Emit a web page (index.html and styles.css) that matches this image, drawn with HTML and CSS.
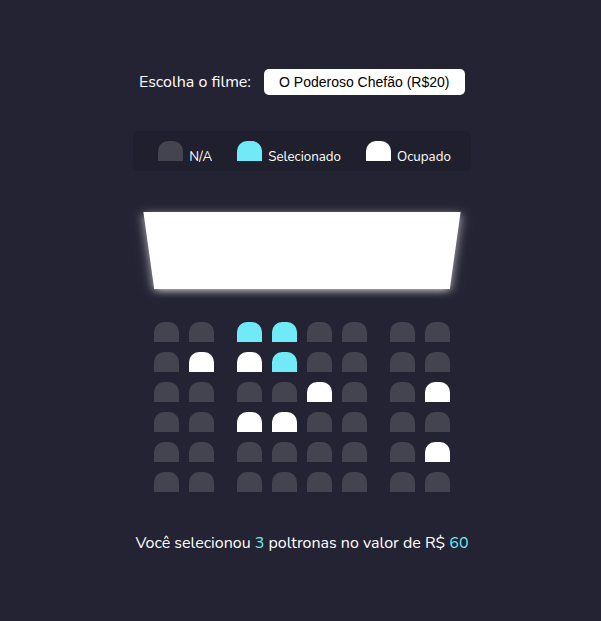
FILE: index.html
```
<!DOCTYPE html>
<html lang="pt-BR">
<head>
<meta charset="utf-8">
<meta name="viewport" content="width=device-width, initial-scale=1">
<title>Escolha de poltronas</title>
<link rel="stylesheet" href="styles.css">
</head>
<body>
<div class="movie">
  <label for="movie">Escolha o filme:</label>
  <select id="movie" class="movie-select">
    <option value="20">O Poderoso Chefão (R$20)</option>
  </select>
</div>

<ul class="legend">
  <li><span class="seat"></span><small>N/A</small></li>
  <li><span class="seat selected"></span><small>Selecionado</small></li>
  <li><span class="seat occupied"></span><small>Ocupado</small></li>
</ul>

<main class="theater">
  <div class="screen"></div>
  <div class="row">
    <input type="checkbox" class="seat" aria-label="A1">
    <input type="checkbox" class="seat" aria-label="A2">
    <input type="checkbox" class="seat" aria-label="A3" checked>
    <input type="checkbox" class="seat" aria-label="A4" checked>
    <input type="checkbox" class="seat" aria-label="A5">
    <input type="checkbox" class="seat" aria-label="A6">
    <input type="checkbox" class="seat" aria-label="A7">
    <input type="checkbox" class="seat" aria-label="A8">
  </div>
  <div class="row">
    <input type="checkbox" class="seat" aria-label="B1">
    <input type="checkbox" class="seat" aria-label="B2" disabled>
    <input type="checkbox" class="seat" aria-label="B3" disabled>
    <input type="checkbox" class="seat" aria-label="B4" checked>
    <input type="checkbox" class="seat" aria-label="B5">
    <input type="checkbox" class="seat" aria-label="B6">
    <input type="checkbox" class="seat" aria-label="B7">
    <input type="checkbox" class="seat" aria-label="B8">
  </div>
  <div class="row">
    <input type="checkbox" class="seat" aria-label="C1">
    <input type="checkbox" class="seat" aria-label="C2">
    <input type="checkbox" class="seat" aria-label="C3">
    <input type="checkbox" class="seat" aria-label="C4">
    <input type="checkbox" class="seat" aria-label="C5" disabled>
    <input type="checkbox" class="seat" aria-label="C6">
    <input type="checkbox" class="seat" aria-label="C7">
    <input type="checkbox" class="seat" aria-label="C8" disabled>
  </div>
  <div class="row">
    <input type="checkbox" class="seat" aria-label="D1">
    <input type="checkbox" class="seat" aria-label="D2">
    <input type="checkbox" class="seat" aria-label="D3" disabled>
    <input type="checkbox" class="seat" aria-label="D4" disabled>
    <input type="checkbox" class="seat" aria-label="D5">
    <input type="checkbox" class="seat" aria-label="D6">
    <input type="checkbox" class="seat" aria-label="D7">
    <input type="checkbox" class="seat" aria-label="D8">
  </div>
  <div class="row">
    <input type="checkbox" class="seat" aria-label="E1">
    <input type="checkbox" class="seat" aria-label="E2">
    <input type="checkbox" class="seat" aria-label="E3">
    <input type="checkbox" class="seat" aria-label="E4">
    <input type="checkbox" class="seat" aria-label="E5">
    <input type="checkbox" class="seat" aria-label="E6">
    <input type="checkbox" class="seat" aria-label="E7">
    <input type="checkbox" class="seat" aria-label="E8" disabled>
  </div>
  <div class="row">
    <input type="checkbox" class="seat" aria-label="F1">
    <input type="checkbox" class="seat" aria-label="F2">
    <input type="checkbox" class="seat" aria-label="F3">
    <input type="checkbox" class="seat" aria-label="F4">
    <input type="checkbox" class="seat" aria-label="F5">
    <input type="checkbox" class="seat" aria-label="F6">
    <input type="checkbox" class="seat" aria-label="F7">
    <input type="checkbox" class="seat" aria-label="F8">
  </div>
</main>

<p class="summary">Você selecionou <span>3</span> poltronas no valor de R$ <span>60</span></p>
</body>
</html>
```
FILE: styles.css
```
* {
  box-sizing: border-box;
}

body {
  margin: 0;
  padding: 2px 0 0 3px;
  min-height: 100vh;
  display: flex;
  flex-direction: column;
  align-items: center;
  justify-content: center;
  background: #242333;
  color: #fff;
  font: 16px/24px Nunito, Lato, sans-serif;
}

.movie {
  display: flex;
  align-items: center;
  gap: 13px;
}

.movie-select {
  appearance: none;
  height: 26px;
  padding: 0 15px;
  border: 0;
  border-radius: 5px;
  background: #fff;
  color: #000;
  font: 14px/26px "Liberation Sans", Arial, sans-serif;
}

.legend {
  display: flex;
  gap: 25px;
  margin: 36px 0 16px;
  padding: 10px 20px 10px 25px;
  border-radius: 5px;
  background: rgba(0, 0, 0, 0.1);
  list-style: none;
}

.legend li {
  display: flex;
  align-items: flex-end;
  gap: 6px;
  height: 20px;
}

.legend small {
  font-size: smaller;
  line-height: 8px;
}

.theater {
  perspective: 1000px;
}

.screen {
  height: 100px;
  margin: 15px 0;
  background: #fff;
  transform: rotateX(-45deg);
  box-shadow: 0 3px 10px rgba(255, 255, 255, 0.7);
}

.theater::before {
  content: "";
  display: table;
}

.row {
  display: flex;
}

.seat {
  appearance: none;
  display: block;
  width: 25px;
  height: 20px;
  margin: 0;
  border-radius: 10px 10px 0 0;
  background: #444451;
}

.row .seat {
  margin: 5px;
}

.row .seat:nth-of-type(2),
.row .seat:nth-of-type(6) {
  margin-right: 18px;
}

.seat.selected,
.seat:checked {
  background: #6feaf6;
}

.seat.occupied,
.seat:disabled {
  background: #fff;
}

.summary {
  margin: 34px 0 0;
}

.summary span {
  color: #6feaf6;
}
```
